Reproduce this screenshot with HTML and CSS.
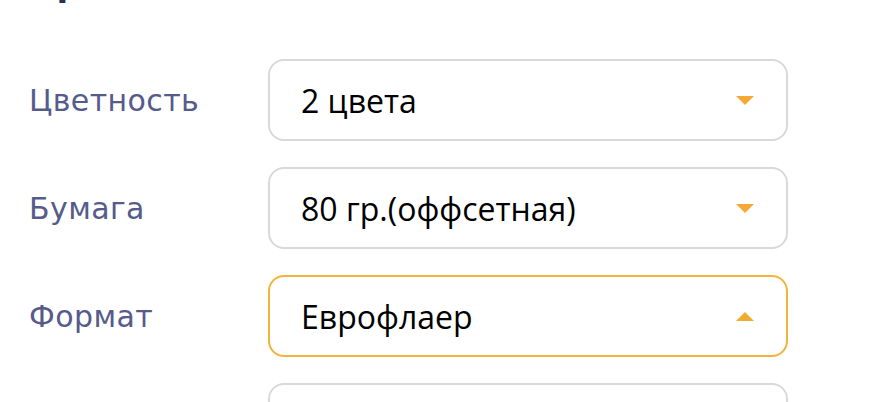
FILE: index.html
```html
<!DOCTYPE html>
<html lang="ru">
<head>
<meta charset="utf-8">
<title>Параметры</title>
<link rel="stylesheet" href="styles.css">
</head>
<body>
<div class="page">
  <h2 class="title">Прочие свойства</h2>
  <div class="form">
    <div class="row">
      <div class="label">Цветность</div>
      <div class="select">
        <span class="value">2 цвета</span>
        <svg class="caret" width="18" height="9" viewBox="0 0 18 9"><path d="M0 0H18L9 9Z" fill="#f5a833"/></svg>
      </div>
    </div>
    <div class="row">
      <div class="label">Бумага</div>
      <div class="select">
        <span class="value">80 гр.(оффсетная)</span>
        <svg class="caret" width="18" height="9" viewBox="0 0 18 9"><path d="M0 0H18L9 9Z" fill="#f5a833"/></svg>
      </div>
    </div>
    <div class="row">
      <div class="label">Формат</div>
      <div class="select open">
        <span class="value">Еврофлаер</span>
        <svg class="caret" width="18" height="9" viewBox="0 0 18 9"><path d="M0 9H18L9 0Z" fill="#f0ac2e"/></svg>
      </div>
    </div>
    <div class="row">
      <div class="label"></div>
      <div class="select">
        <span class="value">&nbsp;</span>
      </div>
    </div>
  </div>
</div>
</body>
</html>
```

FILE: styles.css
```css
html, body {
  margin: 0;
  padding: 0;
  background: #ffffff;
}
body {
  overflow: hidden;
  height: 402px;
}
.page {
  padding-left: 28px;
}
.title {
  margin: -36px 0 0 0;
  height: 40px;
  font-family: "DejaVu Sans", sans-serif;
  font-weight: bold;
  font-size: 34px;
  line-height: 40px;
  color: #2b3052;
}
.form {
  margin-top: 55px;
  display: flex;
  flex-direction: column;
  gap: 26px;
}
.row {
  display: grid;
  grid-template-columns: 240px 520px;
  align-items: center;
}
.label {
  font-family: "DejaVu Sans", sans-serif;
  font-size: 30px;
  letter-spacing: 0.4px;
  color: #565b8c;
  padding-left: 1px;
}
.select {
  box-sizing: border-box;
  height: 82px;
  border: 2px solid #d9d9d9;
  border-radius: 16px;
  display: flex;
  align-items: center;
  justify-content: space-between;
  padding: 0 32px 0 31px;
  background: #fff;
}
.select.open {
  border-color: #f0b43c;
}
.value {
  font-family: "Open Sans", sans-serif;
  font-size: 32px;
  color: #000;
}
.caret {
  display: block;
}
```
